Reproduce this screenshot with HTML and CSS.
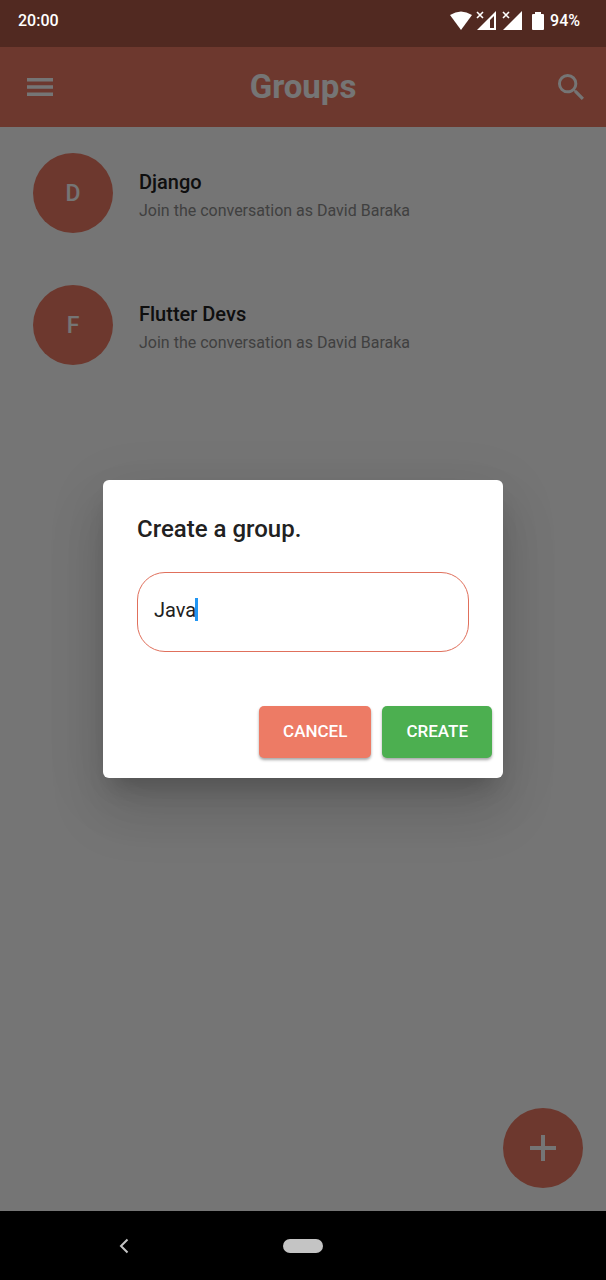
FILE: index.html
```html
<!DOCTYPE html>
<html lang="en">
<head>
<meta charset="utf-8">
<meta name="viewport" content="width=device-width, initial-scale=1">
<title>Groups</title>
<link rel="stylesheet" href="styles.css">
</head>
<body>
<div class="status">
  <span>20:00</span>
  <div class="status-icons">
    <svg width="22" height="20" viewBox="0 0 22 20" fill="#fff"><path d="M0 4Q11 -3 22 4L11 19Z"/></svg>
    <svg width="22" height="20" viewBox="0 0 22 20" fill="#fff"><path d="M20 0V19H1ZM18 5L14 9V17H18Z" fill-rule="evenodd"/><path d="M1 1L7 7M7 1L1 7" stroke="#fff" stroke-width="1.600"/></svg>
    <svg width="22" height="20" viewBox="0 0 22 20" fill="#fff"><path d="M20 0V19H1Z"/><path d="M1 1L7 7M7 1L1 7" stroke="#fff" stroke-width="1.600"/></svg>
    <svg class="battery" width="12" height="20" viewBox="0 0 12 20" fill="#fff"><path d="M3 1H9V3H11Q12 3 12 4V18Q12 19 11 19H1Q0 19 0 18V4Q0 3 1 3H3Z"/></svg>
    <span>94%</span>
  </div>
</div>
<div class="screen">
  <header class="appbar">
    <button class="icon-button menu" aria-label="Open menu"><svg width="26" height="18" viewBox="0 0 26 18" fill="currentColor"><path d="M0 0H26V3.500H0ZM0 7.300H26V10.700H0ZM0 14.500H26V18H0Z"/></svg></button>
    <h1 class="appbar-title">Groups</h1>
    <button class="icon-button search" aria-label="Search"><svg width="26" height="26" viewBox="3 3 17.500 17.500" fill="currentColor"><path d="M15.500 14h-.79l-.28-.27A6.471 6.471 0 0 0 16 9.500 6.500 6.500 0 1 0 9.500 16c1.610 0 3.090-.59 4.230-1.570l.27.28v.79l5 4.990L20.490 19l-4.990-5zm-6 0C7.010 14 5 11.990 5 9.500S7.010 5 9.500 5 14 7.010 14 9.500 11.990 14 9.500 14z"/></svg></button>
  </header>
  <main>
    <ul class="groups">
      <li class="group">
        <span class="avatar">D</span>
        <div class="group-text"><h2 class="group-name">Django</h2><p class="group-note">Join the conversation as David Baraka</p></div>
      </li>
      <li class="group">
        <span class="avatar">F</span>
        <div class="group-text"><h2 class="group-name">Flutter Devs</h2><p class="group-note">Join the conversation as David Baraka</p></div>
      </li>
    </ul>
  </main>
  <button class="fab" aria-label="Add group"><svg width="26" height="26" viewBox="0 0 26 26" fill="currentColor"><path d="M11 0H15V11H26V15H15V26H11V15H0V11H11Z"/></svg></button>
  <div class="scrim">
    <form class="dialog" role="dialog" aria-labelledby="dialog-title">
      <label class="dialog-title" id="dialog-title" for="group-name">Create a group.</label>
      <div class="field">
        <input class="field-input" id="group-name" type="text" value="Java">
        <span class="caret"></span>
      </div>
      <div class="actions">
        <button class="action cancel" type="button">CANCEL</button>
        <button class="action create" type="button">CREATE</button>
      </div>
    </form>
  </div>
</div>
<nav class="navbar">
  <button class="nav-button back" aria-label="Back"><svg width="10" height="16" viewBox="0 0 10 16" fill="none" stroke="#c4c4c4" stroke-width="2"><path d="M8.500 1.500L2 8L8.500 14.500"/></svg></button>
  <button class="nav-button home" aria-label="Home"></button>
</nav>
</body>
</html>
```
FILE: styles.css
```css
* { box-sizing: border-box; }
body {
  margin: 0;
  min-height: 100vh;
  display: flex;
  flex-direction: column;
  font-family: Roboto, sans-serif;
  color: #212121;
  background: #fff;
}
h1, h2, p, ul { margin: 0; padding: 0; }
svg { display: block; }
button { border: 0; padding: 0; font-family: inherit; }

.status {
  height: 47px;
  padding: 0 26px 6px 18px;
  display: flex;
  align-items: center;
  justify-content: space-between;
  background: #512921;
  color: #fff;
  font-size: 16px;
  font-weight: 500;
}
.status-icons { display: flex; align-items: center; gap: 4px; }
.battery { margin: 0 2px 0 4px; }

.screen {
  position: relative;
  flex: 1;
  display: flex;
  flex-direction: column;
}
.appbar {
  height: 80px;
  padding: 0 22px;
  display: grid;
  grid-template-columns: 1fr auto 1fr;
  align-items: center;
  background: #ed7b65;
  color: #fff;
}
.icon-button { background: none; color: inherit; }
.menu { justify-self: start; margin-left: 5px; }
.search { justify-self: end; }
.appbar-title { font-size: 33px; line-height: 40px; font-weight: 700; }

.groups { list-style: none; }
.group {
  height: 132px;
  padding: 0 33px;
  display: flex;
  align-items: center;
  gap: 26px;
}
.avatar {
  flex: none;
  width: 80px;
  height: 80px;
  border-radius: 50%;
  display: grid;
  place-items: center;
  background: #ed7b65;
  color: #fff;
  font-size: 23px;
  font-weight: 500;
}
.group-text { padding-top: 7px; }
.group-name { font-size: 20px; line-height: 28px; font-weight: 500; }
.group-note { font-size: 16px; line-height: 30px; color: #8c8c8c; }

.fab {
  position: absolute;
  right: 23px;
  bottom: 23px;
  width: 80px;
  height: 80px;
  border-radius: 50%;
  display: grid;
  place-items: center;
  background: #ed7b65;
  color: #fff;
}

.scrim {
  position: absolute;
  inset: 0;
  padding: 0 103px;
  display: flex;
  align-items: center;
  background: rgba(0, 0, 0, 0.54);
}
.dialog {
  flex: 1;
  min-width: 0;
  padding: 32px 11px 20px;
  border-radius: 6px;
  background: #fff;
  box-shadow: 0 16px 22px -10px rgba(0, 0, 0, 0.2), 0 34px 54px 4px rgba(0, 0, 0, 0.1), 0 13px 60px 4px rgba(0, 0, 0, 0.08);
}
.dialog-title {
  display: block;
  margin: 0 23px 26px;
  font-size: 24px;
  line-height: 34px;
  font-weight: 500;
}
.field { position: relative; margin: 0 23px 54px; }
.field-input {
  display: block;
  width: 100%;
  height: 80px;
  padding: 0 16px 4px;
  border: 1px solid #e0705c;
  border-radius: 28px;
  outline: 0;
  background: #fff;
  color: #212121;
  caret-color: transparent;
  font-family: inherit;
  font-size: 20px;
}
.caret {
  position: absolute;
  left: 58px;
  top: 26px;
  width: 3px;
  height: 23px;
  background: #2196f3;
}
.actions { display: flex; justify-content: flex-end; gap: 11px; }
.action {
  height: 52px;
  padding: 0 24px 2px;
  border-radius: 5px;
  color: #fff;
  font-size: 17px;
  font-weight: 500;
  box-shadow: 0 2px 3px rgba(0, 0, 0, 0.35);
}
.cancel { background: #ed7b65; }
.create { background: #4caf50; }

.navbar {
  height: 69px;
  display: grid;
  grid-template-columns: 1fr 40px 1fr;
  align-items: center;
  background: #000;
}
.nav-button { background: none; }
.back { justify-self: center; margin-right: 36px; }
.home { height: 14px; border-radius: 7px; background: #c4c4c4; }
```
